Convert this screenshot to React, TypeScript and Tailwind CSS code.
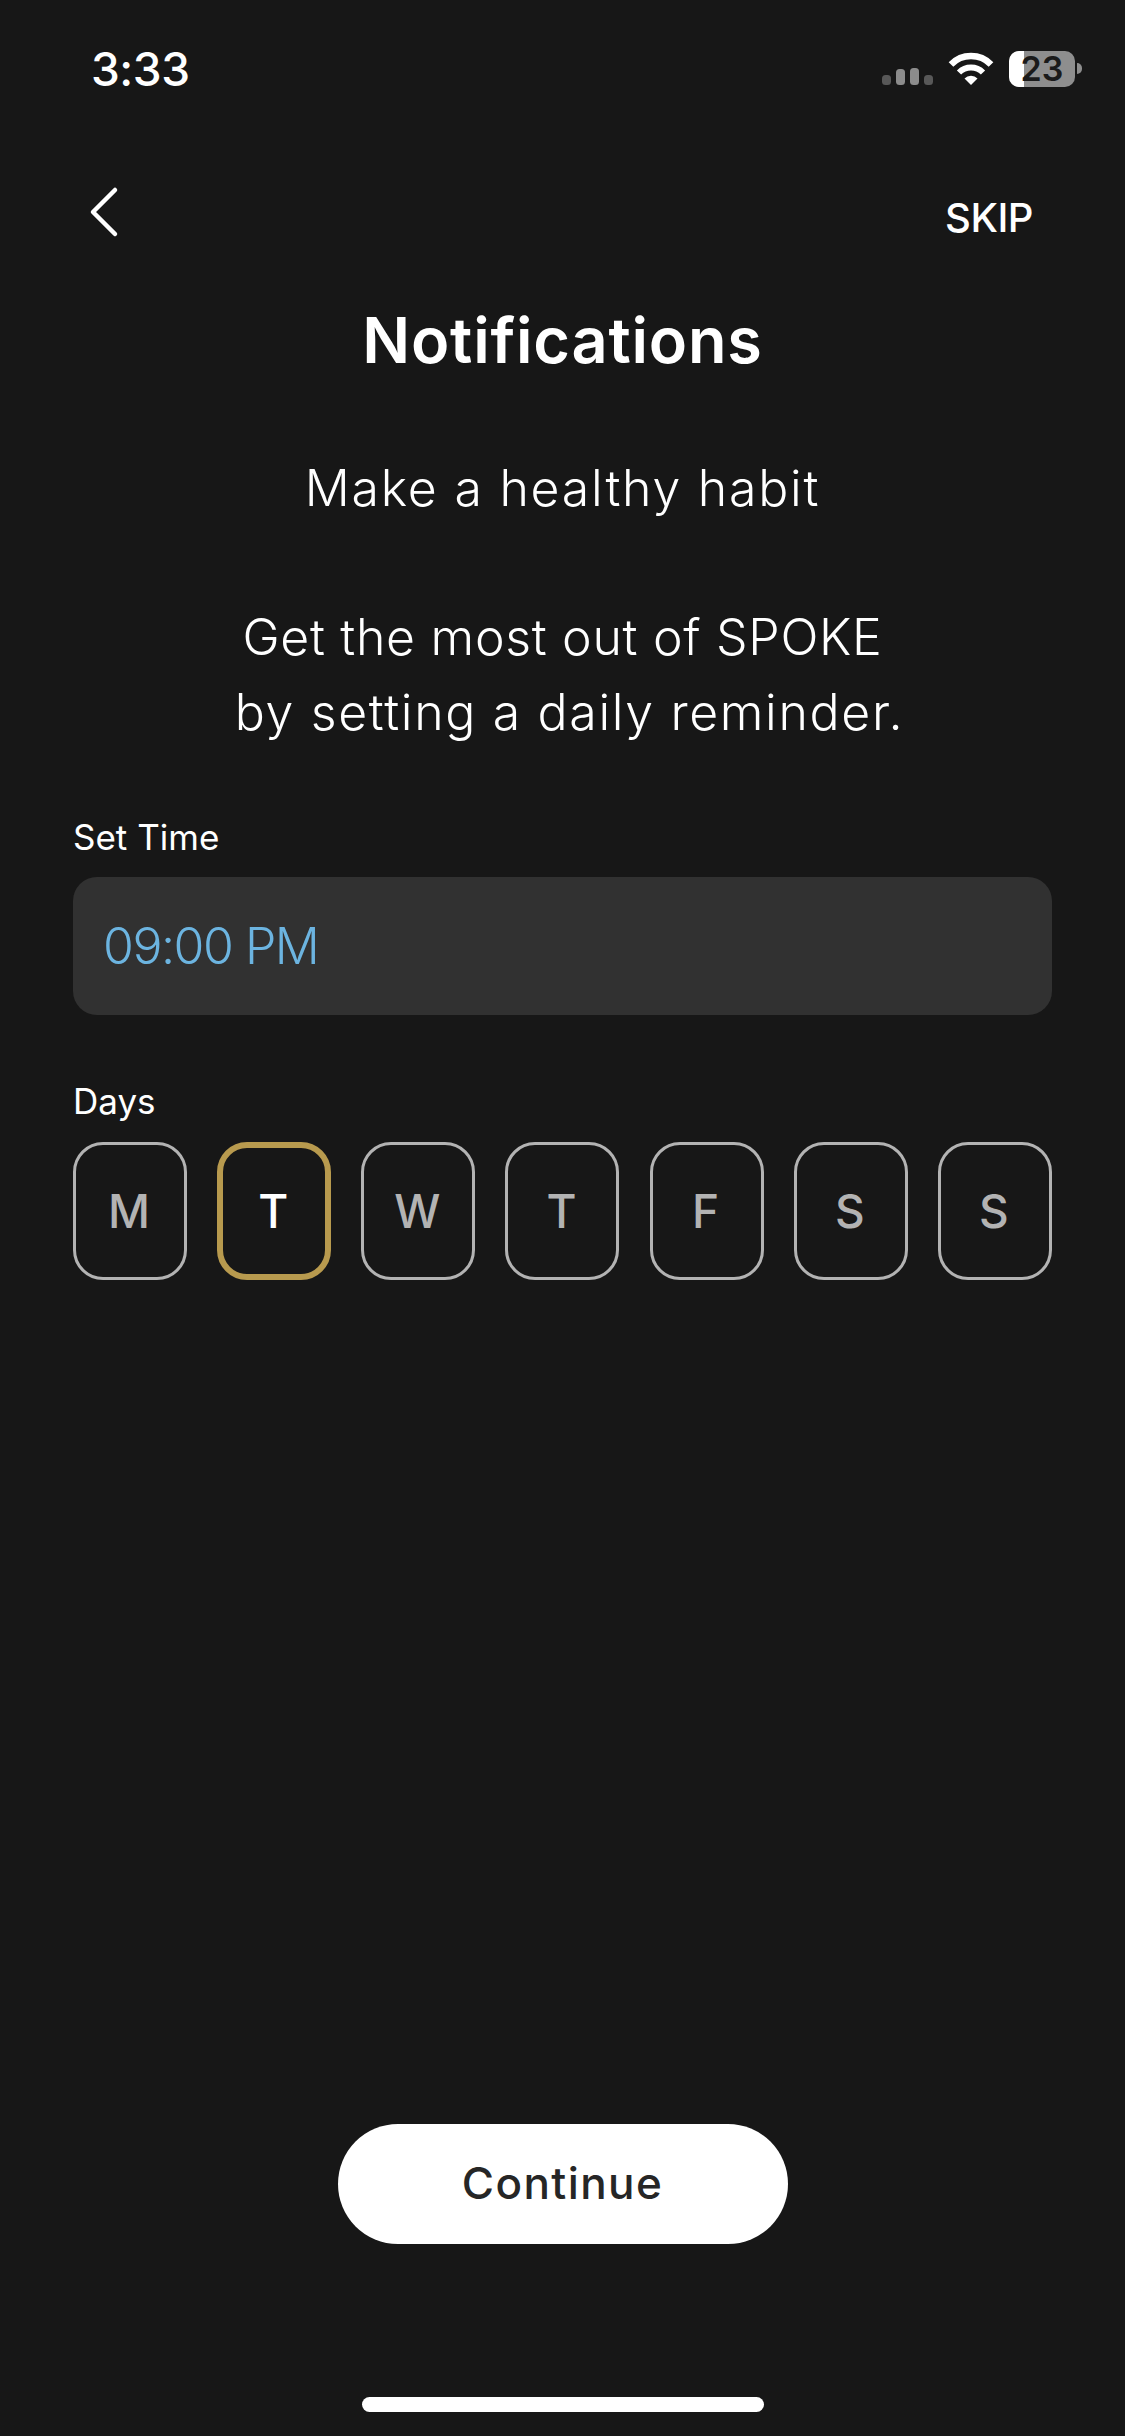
const days = [
  { label: 'M', selected: false },
  { label: 'T', selected: true },
  { label: 'W', selected: false },
  { label: 'T', selected: false },
  { label: 'F', selected: false },
  { label: 'S', selected: false },
  { label: 'S', selected: false },
];

function StatusBar() {
  return (
    <div className="flex h-[136px] items-start justify-between pl-[91px] pr-[43px] pt-[51px]">
      <span className="text-[46px] font-medium leading-[36px] tracking-[-0.5px] text-white font-['Inter',sans-serif]">3:33</span>
      <div className="flex items-start">
        <svg className="mt-[17px]" width="51" height="17" viewBox="0 0 51 17">
          <rect x="0" y="7" width="9" height="10" rx="3.5" fill="#585858" />
          <rect x="14" y="1" width="9" height="16" rx="3.5" fill="#8c8c8c" />
          <rect x="28" y="0" width="9" height="17" rx="3.5" fill="#8c8c8c" />
          <rect x="42" y="7" width="9" height="10" rx="3.5" fill="#585858" />
        </svg>
        <svg className="ml-[15px] mt-[1px]" width="46" height="33" viewBox="0 0 46 33" fill="none">
          <path d="M3 12.5 A 28 28 0 0 1 43 12.5" stroke="#fff" strokeWidth="6.5" />
          <path d="M11 20.5 A 17 17 0 0 1 35 20.5" stroke="#fff" strokeWidth="6" />
          <path d="M23 33 L16.5 26.5 A 9 9 0 0 1 29.5 26.5 Z" fill="#fff" />
        </svg>
        <div className="relative ml-[15px] flex h-[36px] w-[66px] items-center justify-center rounded-[10px] bg-[#8e8e8e]">
          <div className="absolute inset-y-0 left-0 w-[15px] rounded-l-[10px] bg-white" />
          <span className="relative text-[34px] font-semibold leading-[36px] text-[#1a1a1a] font-['Inter',sans-serif]">23</span>
        </div>
        <div className="ml-[2px] mt-[12px] h-[11px] w-[5px] rounded-r-full bg-[#8e8e8e]" />
      </div>
    </div>
  );
}

export default function App() {
  return (
    <div className="flex h-[2436px] w-[1125px] flex-col bg-[#171717] font-['Inter',sans-serif] text-white">
      <StatusBar />

      {/* Nav */}
      <div className="flex items-start justify-between pl-[88px] pr-[92px] pt-[50px]">
        <svg width="32" height="52" viewBox="0 0 32 52" fill="none">
          <path d="M27 4 L5 26 L27 48" stroke="#fff" strokeWidth="4.5" strokeLinecap="round" strokeLinejoin="round" />
        </svg>
        <span className="mt-[8px] text-[40px] font-medium leading-[48px] tracking-[-0.5px]">SKIP</span>
      </div>

      <h1 className="mt-[62px] text-center text-[63px] font-semibold leading-[72px] tracking-[0.8px]">Notifications</h1>

      <p className="mt-[75px] text-center text-[50px] font-light leading-[75px] tracking-[1.75px]">Make a healthy habit</p>
      <p className="mt-[74px] text-center text-[50px] font-light leading-[75px]">
        <span className="tracking-[0.7px]">Get the most out of SPOKE</span>
        <br />
        <span className="ml-[14px] tracking-[1.65px]">by setting a daily reminder.</span>
      </p>

      <div className="flex flex-col px-[73px]">
        <label className="mt-[62px] text-[35px] font-normal leading-[50px]">Set Time</label>
        <div className="mt-[15px] flex h-[138px] w-[979px] items-center rounded-[24px] bg-[#313131] pl-[30px]">
          <span className="text-[50px] font-light leading-[60px] tracking-[-1.5px] text-[#6cb4e0]">09:00 PM</span>
        </div>

        <label className="mt-[61px] text-[35px] font-normal leading-[50px]">Days</label>
        <div className="mt-[16px] flex w-[979px] justify-between">
          {days.map((day, idx) => (
            <div
              key={idx}
              className={
                day.selected
                  ? 'flex h-[138px] w-[114px] items-center justify-center rounded-[30px] border-[6px] border-[#b89a4e] pr-[2px] text-[46px] font-medium text-white'
                  : 'flex h-[138px] w-[114px] items-center justify-center rounded-[30px] border-[3px] border-[#b3b3b3] pr-[2px] text-[46px] font-medium text-[#b3b3b3]'
              }
            >
              {day.label}
            </div>
          ))}
        </div>
      </div>

      <div className="mt-auto flex flex-col items-center pb-[24px]">
        <button className="flex h-[120px] w-[450px] items-center justify-center rounded-full bg-white pb-[2px] text-[44px] font-medium tracking-[1.4px] text-[#262626]">
          Continue
        </button>
        <div className="mt-[153px] h-[15px] w-[402px] rounded-full bg-white" />
      </div>
    </div>
  );
}
